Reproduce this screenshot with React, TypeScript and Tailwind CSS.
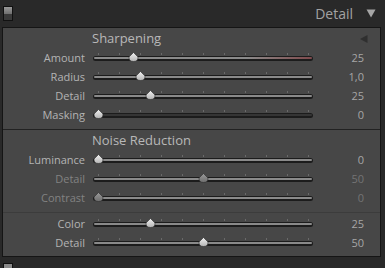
import React from "react";

type Row = {
	label: string;
	value: string;
	pos: number; // 0..1 along the slider range
	dim?: boolean;
	dark?: boolean;
	warn?: boolean;
};

const sharpening: Row[] = [
	{ label: "Amount", value: "25", pos: 25 / 150, warn: true },
	{ label: "Radius", value: "1,0", pos: 0.2 },
	{ label: "Detail", value: "25", pos: 0.25 },
	{ label: "Masking", value: "0", pos: 0, dark: true },
];

const noise: Row[] = [
	{ label: "Luminance", value: "0", pos: 0 },
	{ label: "Detail", value: "50", pos: 0.5, dim: true },
	{ label: "Contrast", value: "0", pos: 0, dim: true },
];

const color: Row[] = [
	{ label: "Color", value: "25", pos: 0.25 },
	{ label: "Detail", value: "50", pos: 0.5 },
];

const ticks = [0, 1, 2, 3, 4, 5, 6, 7, 8, 9, 10];

const Thumb = ({ dim }: { dim?: boolean }) => (
	<svg width="11" height="10" viewBox="0 0 11 10">
		<defs>
			<linearGradient id={dim ? "thDim" : "thOn"} x1="0" y1="0" x2="0" y2="1">
				<stop offset="0" stopColor={dim ? "#9a9a9a" : "#f2f2f2"} />
				<stop offset="1" stopColor={dim ? "#6e6e6e" : "#b4b4b4"} />
			</linearGradient>
		</defs>
		<path
			d="M5.5 0.5 L10 5 Q10.2 9.5 5.5 9.5 Q0.8 9.5 1 5 Z"
			fill={`url(#${dim ? "thDim" : "thOn"})`}
			stroke="#2a2a2a"
			strokeWidth="0.6"
		/>
	</svg>
);

const Slider = ({ row }: { row: Row }) => {
	const trackColor = row.warn
		? "bg-linear-to-r from-[#8a8a8a] via-[#8a8a8a] via-70% to-[#7e4a4d]"
		: row.dark
			? "bg-[#353535]"
			: "bg-[#8a8a8a]";

	return (
		<div className="flex h-[19px] items-center">
			<div className="w-[82px] text-right text-[11px] leading-none">
				<span className={row.dim ? "text-[#828282]" : "text-[#b4b4b4]"}>{row.label}</span>
			</div>
			<div className="relative ml-[8px] flex h-full w-[220px] items-center">
				{ticks.map((t) => (
					<div
						key={t}
						className="absolute top-[5px] h-[2px] w-px bg-[#6a6a6a]"
						style={{ left: 5 + t * 21 }}
					/>
				))}
				<div className="mt-[1px] h-[5px] w-full rounded-full bg-[#1c1c1c] px-[1px] pt-[1px]">
					<div className={`h-[2px] w-full rounded-full ${trackColor}`} />
				</div>
				<div
					className="absolute top-[4px] leading-none"
					style={{ left: 5 + row.pos * 210 - 5.5 }}>
					<Thumb dim={row.dim} />
				</div>
			</div>
			<div
				className={`w-[51px] text-right text-[11px] leading-none ${row.dim ? "text-[#747474]" : "text-[#a6a6a6]"}`}>
				{row.value}
			</div>
		</div>
	);
};

export default function App() {
	return (
		<div
			className="h-[268px] w-[385px] overflow-hidden bg-[#292929]"
			style={{ fontFamily: '"Open Sans", "Liberation Sans", sans-serif' }}>
			{/* panel header */}
			<div className="flex h-[27px] items-center justify-between">
				<div className="ml-[3px] mt-[-1px] flex h-[15px] w-[10px] flex-col border border-[#111]">
					<div className="h-[7px] bg-linear-to-b from-[#9a9a9a] to-[#6f6f6f]" />
					<div className="flex-1 bg-[#3a3a3a]" />
				</div>
				<div className="mr-[9px] flex items-center gap-[13px]">
					<span className="text-[14px] leading-none text-[#a3a3a3]">Detail</span>
					<svg width="10" height="9" viewBox="0 0 10 9">
						<path d="M0.5 0.5 H9.5 L5 8.5 Z" fill="#a6a6a6" />
					</svg>
				</div>
			</div>

			{/* panel body */}
			<div className="ml-[2px] w-[379px] border border-[#151515] bg-[#474747]">
				<div className="flex h-[20px] items-center justify-between">
					<span className="pl-[89px] text-[13px] leading-none text-[#b8b8b8]">Sharpening</span>
					<svg className="mr-[12px] mt-[2px]" width="8" height="8" viewBox="0 0 8 8">
						<path d="M7.5 0 V8 L0 4 Z" fill="#2f2f2f" />
					</svg>
				</div>
				{sharpening.map((r) => (
					<Slider key={r.label} row={r} />
				))}

				<div className="mt-[5px] h-px bg-[#222]" />

				<div className="flex h-[20px] items-center">
					<span className="pl-[89px] text-[13px] leading-none text-[#b8b8b8]">Noise Reduction</span>
				</div>
				{noise.map((r) => (
					<Slider key={r.label} row={r} />
				))}

				<div className="mt-[5px] h-px bg-[#3c3c3c]" />
				<div className="pt-[1px]">
					{color.map((r) => (
						<Slider key={r.label} row={r} />
					))}
				</div>
				<div className="h-[4px]" />
			</div>

			{/* next panel toggle, cut off */}
			<div className="ml-[3px] mt-[6px] h-[12px] w-[10px] border border-[#111] bg-[#8a8a8a]" />
		</div>
	);
}
